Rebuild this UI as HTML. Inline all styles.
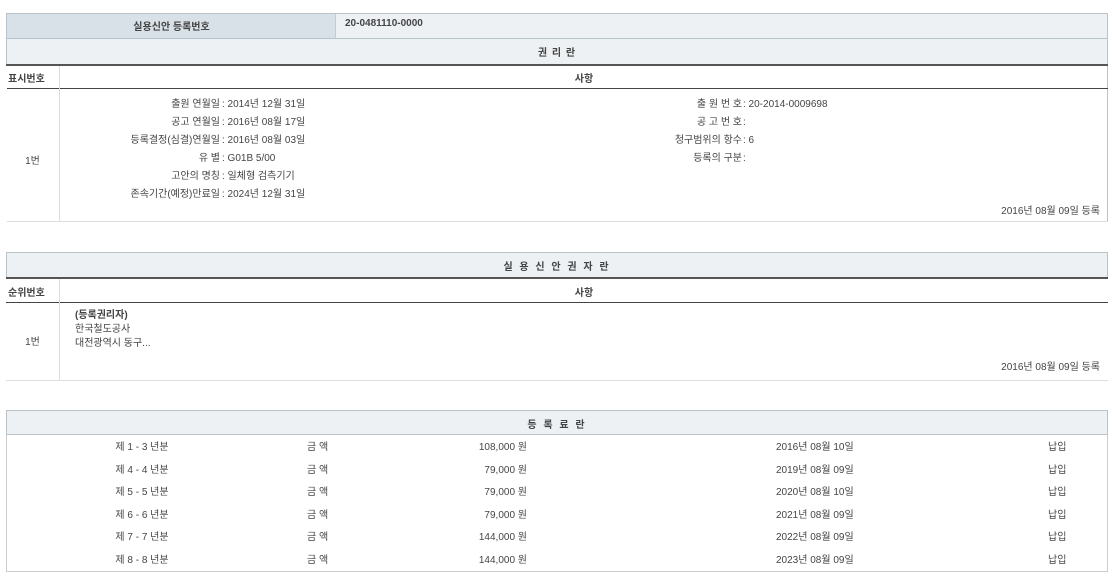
<!DOCTYPE html>
<html><head><meta charset="utf-8"><style>
*{margin:0;padding:0;box-sizing:border-box}
body{width:1112px;height:577px;background:#fff;font-family:"Liberation Sans","Noto Sans CJK KR","NanumGothic",sans-serif;font-size:10px;color:#444;position:relative;overflow:hidden}
.a{position:absolute;white-space:nowrap}
.b{position:absolute}
.hd{font-weight:bold;color:#444;letter-spacing:1px}
.r{text-align:right}
.c{text-align:center}
</style></head><body>
<!-- Section 1 -->
<div class="b" style="left:6px;top:13px;width:1102px;height:209px;border:1px solid #b9c3ca;border-bottom:none"></div>
<div class="b" style="left:7px;top:14px;width:329px;height:24px;background:#d9e1e8;border-right:1px solid #c2ccd3"></div>
<div class="b" style="left:336px;top:14px;width:771px;height:24px;background:#edf1f4"></div>
<div class="b" style="left:6px;top:38px;width:1102px;height:1px;background:#b9c3ca"></div>
<div class="b" style="left:7px;top:39px;width:1100px;height:25px;background:#edf1f4"></div>
<div class="b" style="left:6px;top:64px;width:1102px;height:2px;background:#555"></div>
<div class="b" style="left:6px;top:88px;width:1102px;height:1px;background:#444"></div>
<div class="b" style="left:59px;top:66px;width:1px;height:156px;background:#ddd"></div>
<div class="b" style="left:6px;top:221px;width:1102px;height:1px;background:#ddd"></div>
<div class="b" style="left:6px;top:66px;width:1px;height:156px;background:#fff"></div>
<div class="a c" style="left:7px;top:18px;width:329px;font-weight:bold">실용신안 등록번호</div>
<div class="a" style="left:345px;top:18px;font-weight:bold">20-0481110-0000</div>
<div class="a c hd" style="left:7px;top:44px;width:1100px">권 리 란</div>
<div class="a hd" style="left:8px;top:70px;letter-spacing:0">표시번호</div>
<div class="a c hd" style="left:60px;top:70px;width:1048px;letter-spacing:0">사항</div>
<div class="a c" style="left:6px;top:152px;width:53px">1번</div>
<div class="a r" style="left:60px;top:96px;width:160px;line-height:18px">출원 연월일<br>공고 연월일<br>등록결정(심결)연월일<br>유 별<br>고안의 명칭<br>존속기간(예정)만료일</div>
<div class="a" style="left:222px;top:96px;line-height:18px">: 2014년 12월 31일<br>: 2016년 08월 17일<br>: 2016년 08월 03일<br>: G01B 5/00<br>: 일체형 검측기기<br>: 2024년 12월 31일</div>
<div class="a r" style="left:600px;top:96px;width:142px;line-height:18px">출 원 번 호<br>공 고 번 호<br>청구범위의 항수<br>등록의 구분</div>
<div class="a" style="left:743px;top:96px;line-height:18px">: 20-2014-0009698<br>:<br>: 6<br>:</div>
<div class="a r" style="left:900px;top:202px;width:200px">2016년 08월 09일 등록</div>
<!-- Section 2 -->
<div class="b" style="left:6px;top:252px;width:1102px;height:25px;background:#edf1f4;border:1px solid #b9c3ca;border-bottom:none"></div>
<div class="b" style="left:6px;top:277px;width:1102px;height:2px;background:#555"></div>
<div class="b" style="left:6px;top:302px;width:1102px;height:1px;background:#444"></div>
<div class="b" style="left:59px;top:279px;width:1px;height:101px;background:#ddd"></div>
<div class="b" style="left:6px;top:380px;width:1102px;height:1px;background:#ddd"></div>
<div class="a c hd" style="left:6px;top:258px;width:1102px;letter-spacing:2px">실 용 신 안 권 자 란</div>
<div class="a hd" style="left:8px;top:284px;letter-spacing:0">순위번호</div>
<div class="a c hd" style="left:60px;top:284px;width:1048px;letter-spacing:0">사항</div>
<div class="a c" style="left:6px;top:333px;width:53px">1번</div>
<div class="a" style="left:75px;top:309px;line-height:14px"><b>(등록권리자)</b><br>한국철도공사<br>대전광역시 동구...</div>
<div class="a r" style="left:900px;top:358px;width:200px">2016년 08월 09일 등록</div>
<!-- Section 3 -->
<div class="b" style="left:6px;top:410px;width:1102px;height:162px;border:1px solid #ccc"></div>
<div class="b" style="left:6px;top:410px;width:1102px;height:25px;background:#edf1f4;border:1px solid #b9c3ca"></div>
<div class="a c hd" style="left:6px;top:416px;width:1102px;letter-spacing:2px">등 록 료 란</div>
<div class="a" style="left:0;top:437px;width:1112px;line-height:22.6px">
<div style="position:absolute;left:142px;width:0"><div style="position:absolute;transform:translateX(-50%)">제 1 - 3 년분<br>제 4 - 4 년분<br>제 5 - 5 년분<br>제 6 - 6 년분<br>제 7 - 7 년분<br>제 8 - 8 년분</div></div>
<div style="position:absolute;left:307px">금 액<br>금 액<br>금 액<br>금 액<br>금 액<br>금 액</div>
<div style="position:absolute;left:432px;width:95px;text-align:right">108,000 원<br>79,000 원<br>79,000 원<br>79,000 원<br>144,000 원<br>144,000 원</div>
<div style="position:absolute;left:776px">2016년 08월 10일<br>2019년 08월 09일<br>2020년 08월 10일<br>2021년 08월 09일<br>2022년 08월 09일<br>2023년 08월 09일</div>
<div style="position:absolute;left:1048px">납입<br>납입<br>납입<br>납입<br>납입<br>납입</div>
</div>
</body></html>
